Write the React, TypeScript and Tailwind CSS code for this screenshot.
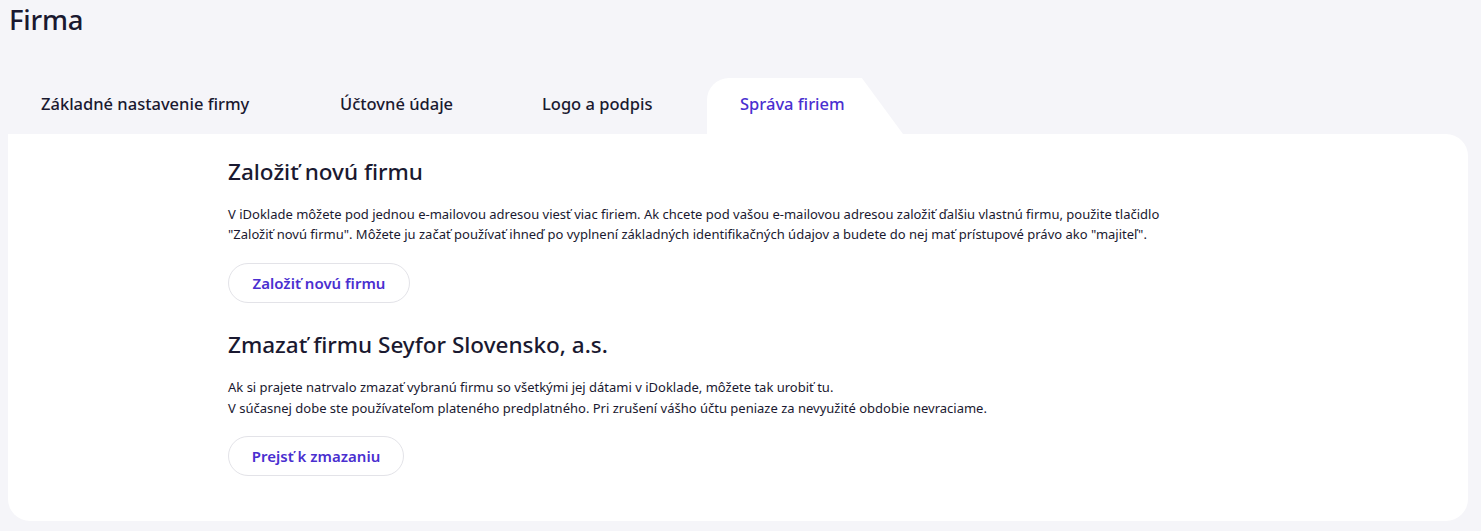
import React from 'react';

const tabs = [
  { label: 'Základné nastavenie firmy', w: 'w-[276px]' },
  { label: 'Účtovné údaje', w: 'w-[179px]' },
  { label: 'Logo a podpis', w: 'w-[175px]' },
];

const App = () => {
  return (
    <div className="min-h-[531px] bg-[#f5f5f9] pl-2 pr-[13px] pt-[3px] pb-[11px] text-[#1a1930] font-['Noto_Sans',sans-serif]">
      <h1 className="pl-px text-[27.5px] leading-[34px] font-medium tracking-[-0.2px]">Firma</h1>

      <div className="mt-[41px] flex gap-[23px]">
        {tabs.map((t) => (
          <div key={t.label} className={`${t.w} h-[56px] flex items-center pl-[33px] pb-[3px] text-[16.5px] font-medium whitespace-nowrap`}>
            {t.label}
          </div>
        ))}
        <div className="relative w-[196px] h-[56px]">
          <div className="absolute inset-0 bg-white rounded-tl-[22px] [clip-path:polygon(0_0,79%_0,100%_100%,0_100%)]" />
          <div className="relative h-full flex items-center pl-[33px] pb-[3px] text-[16.5px] font-medium text-[#4a2fd0] whitespace-nowrap">
            Správa firiem
          </div>
        </div>
      </div>

      <div className="bg-white rounded-b-[22px] rounded-tr-[22px] pl-[220px] pr-8 pt-[23px] pb-[45px]">
        <section>
          <h2 className="text-[22.5px] leading-[30px] font-medium">Založiť novú firmu</h2>
          <p className="mt-[17px] text-[13px] leading-[20px]">
            V iDoklade môžete pod jednou e-mailovou adresou viesť viac firiem. Ak chcete pod vašou e-mailovou adresou založiť ďalšiu vlastnú firmu, použite tlačidlo
            <br />
            "Založiť novú firmu". Môžete ju začať používať ihneď po vyplnení základných identifikačných údajov a budete do nej mať prístupové právo ako "majiteľ".
          </p>
          <button className="mt-[19px] h-[40px] w-[182px] rounded-full border border-[#e3e3e8] bg-white text-[15px] font-semibold text-[#4a2fd0]">
            Založiť novú firmu
          </button>
        </section>

        <section className="mt-[27px]">
          <h2 className="text-[22.5px] leading-[30px] font-medium">Zmazať firmu Seyfor Slovensko, a.s.</h2>
          <p className="mt-[17px] text-[13px] leading-[21px]">
            Ak si prajete natrvalo zmazať vybranú firmu so všetkými jej dátami v iDoklade, môžete tak urobiť tu.
            <br />
            V súčasnej dobe ste používateľom plateného predplatného. Pri zrušení vášho účtu peniaze za nevyužité obdobie nevraciame.
          </p>
          <button className="mt-[17px] h-[40px] w-[176px] rounded-full border border-[#e3e3e8] bg-white text-[15px] font-semibold text-[#4a2fd0]">
            Prejsť k zmazaniu
          </button>
        </section>
      </div>
    </div>
  );
};

export default App;
